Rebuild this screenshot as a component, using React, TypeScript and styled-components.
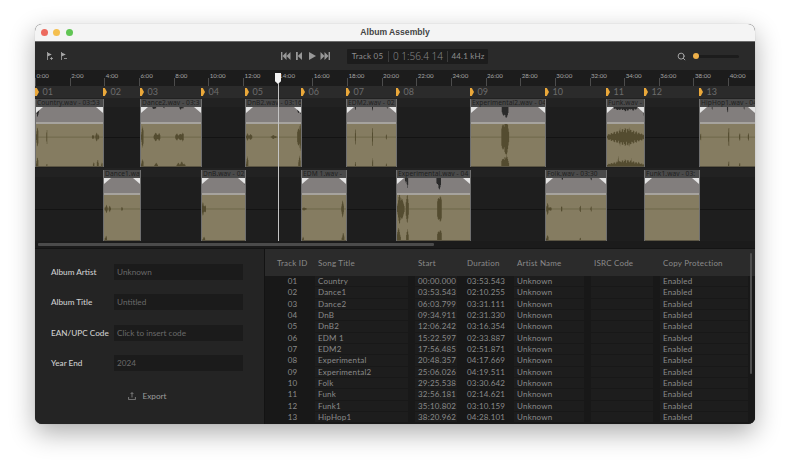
import React from "react";
import styled, { createGlobalStyle } from "styled-components";
import { Search } from "lucide-react";

const UI_FONT = `Lato, "Noto Sans", "Liberation Sans", sans-serif`;

type Spike = [number, number, number]; // x %, height %, half width %

interface ClipData {
    name: string;
    left: number;
    width: number;
    top?: Spike[];
    mid?: Spike[];
    base?: Spike[];
}

const TOP_LANE: ClipData[] = [
    {
        name: "Country.wav - 03:53", left: 0, width: 68,
        top: [[2, 70, 2.5]],
        mid: [[1.5, 28, 1.5], [16, 18, 0.6], [85, 8, 1.5], [90, 12, 1.5], [93, 9, 0.8]],
        base: [[1.5, 25, 1.5], [16, 10, 0.5], [86, 10, 1], [92, 18, 1.2], [98, 10, 0.8]],
    },
    {
        name: "Dance2.wav - 03:3", left: 105, width: 61,
        top: [[22, 20, 3], [38, 12, 1], [66, 20, 2], [69, 15, 1.5]],
        mid: [[2, 28, 2], [25, 12, 4], [30, 10, 2], [60, 10, 3], [66, 12, 3], [69, 12, 2]],
        base: [[2, 18, 2], [25, 8, 3], [62, 8, 3], [68, 12, 3], [72, 8, 2]],
    },
    {
        name: "DnB2.wav - 03:16", left: 210, width: 56,
        top: [[96, 60, 3], [99, 80, 1.5]],
        mid: [[2, 10, 2], [7, 8, 4], [50, 5, 5], [96, 30, 3], [98, 35, 2]],
        base: [[2, 25, 2], [97, 25, 2]],
    },
    {
        name: "EDM2.wav - 02", left: 311, width: 50,
        top: [[17, 30, 0.8], [52, 30, 1], [82, 12, 0.6]],
        mid: [[17, 28, 0.8], [52, 28, 1], [80, 8, 0.7]],
        base: [[17, 15, 0.8], [52, 20, 0.8], [80, 8, 0.7]],
    },
    {
        name: "Experimental2.wav - 04", left: 435, width: 75,
        top: [[46, 100, 4.5]],
        mid: [[46, 60, 5]],
        base: [[46, 35, 5]],
    },
    {
        name: "Funk.wav - 02", left: 571, width: 38,
        top: [[30, 25, 15], [50, 30, 20], [70, 25, 15], [99, 70, 2]],
        mid: [[50, 22, 50], [35, 25, 1.5], [60, 25, 1.5], [20, 15, 1.5], [80, 15, 1.5]],
        base: [[50, 16, 50], [30, 25, 1.5], [65, 20, 1.5], [85, 18, 1.5]],
    },
    {
        name: "HipHop1.wav - 04", left: 664, width: 56,
        top: [[50, 40, 1], [22, 20, 0.6], [80, 20, 0.5]],
        mid: [[1, 12, 1], [52, 28, 1], [72, 10, 1], [88, 10, 1]],
        base: [[52, 14, 1], [72, 8, 1]],
    },
];

const BOTTOM_LANE: ClipData[] = [
    {
        name: "Dance1.wav", left: 68, width: 37,
        mid: [[6, 10, 4], [16, 8, 3], [50, 6, 2]],
        base: [[5, 12, 3]],
    },
    {
        name: "DnB.wav - 02", left: 166, width: 44,
        top: [[99, 80, 1]],
        mid: [[2, 16, 3], [6, 12, 3]],
        base: [[4, 8, 3]],
    },
    {
        name: "EDM 1.wav -", left: 266, width: 45,
        mid: [[5, 4, 5], [92, 20, 3]],
        base: [[2, 8, 2], [93, 18, 3]],
    },
    {
        name: "Experimental.wav - 04", left: 361, width: 74,
        top: [[12, 35, 1], [14, 70, 0.8], [57, 100, 3]],
        mid: [[3, 35, 3], [6, 25, 4], [14, 35, 2], [58, 45, 3]],
        base: [[2, 28, 3], [14, 25, 1.5], [58, 35, 3]],
    },
    {
        name: "Folk.wav - 03:30", left: 510, width: 61,
        top: [[27, 18, 0.8], [75, 18, 0.8], [99, 50, 1]],
        mid: [[2, 18, 1.5], [6, 6, 3], [26, 8, 1], [57, 8, 1], [75, 8, 1]],
        base: [[2, 12, 2], [57, 6, 1]],
    },
    { name: "Funk1.wav - 03:", left: 609, width: 55 },
];

const MARKERS = [0, 68, 105, 166, 210, 266, 311, 361, 435, 510, 571, 609, 664];

const RULER = Array.from({ length: 21 }, (_, i) => `${i * 2}:00`);

const TRACKS = [
    ["01", "Country", "00:00.000", "03:53.543"],
    ["02", "Dance1", "03:53.543", "02:10.255"],
    ["03", "Dance2", "06:03.799", "03:31.111"],
    ["04", "DnB", "09:34.911", "02:31.330"],
    ["05", "DnB2", "12:06.242", "03:16.354"],
    ["06", "EDM 1", "15:22.597", "02:33.887"],
    ["07", "EDM2", "17:56.485", "02:51.871"],
    ["08", "Experimental", "20:48.357", "04:17.669"],
    ["09", "Experimental2", "25:06.026", "04:19.511"],
    ["10", "Folk", "29:25.538", "03:30.642"],
    ["11", "Funk", "32:56.181", "02:14.621"],
    ["12", "Funk1", "35:10.802", "03:10.159"],
    ["13", "HipHop1", "38:20.962", "04:28.101"],
];

const FIELDS = [
    ["Album Artist", "Unknown"],
    ["Album Title", "Untitled"],
    ["EAN/UPC Code", "Click to insert code"],
    ["Year End", "2024"],
];

// jagged columns for one spike, so the wave does not look like a solid blob
const columns = ([x, h, w]: Spike) => {
    const out: [number, number, number][] = [];
    const step = Math.max(0.7, Math.min(w / 8, 2));
    for (let dx = -w; dx <= w; dx += step) {
        const shape = 1 - Math.abs(dx) / (w + step);
        const noise = 0.5 + 0.5 * Math.abs(Math.sin((x + dx) * 12.9898));
        out.push([x + dx, h * (0.25 + 0.75 * shape) * noise, step]);
    }
    return out;
};

// spikes around a centre line
const midPath = (list: Spike[] = [], y: number) =>
    list.flatMap(columns).map(([x, h, w]) => `M${x} ${y - h}h${w}V${y + h}h${-w}Z`).join("");

// spikes that grow out of one edge
const edgePath = (list: Spike[] = [], y: number, dir: number) =>
    list.flatMap(columns).map(([x, h, w]) => `M${x} ${y}h${w}V${y + dir * h}h${-w}Z`).join("");

const GlobalStyle = createGlobalStyle`
    html, body {
        margin: 0;
        background: #ffffff;
        font-family: ${UI_FONT};
    }
    * {
        box-sizing: border-box;
    }
`;

const Page = styled.div`
    width: 790px;
    height: 471px;
    padding: 24px 35px;
    overflow: hidden;
`;

const Window = styled.div`
    width: 720px;
    height: 400px;
    border-radius: 7px;
    overflow: hidden;
    display: flex;
    flex-direction: column;
    background: #242424;
    box-shadow: 0 9px 26px rgba(0, 0, 0, 0.32), 0 0 1px rgba(0, 0, 0, 0.3);
`;

const TitleBar = styled.div`
    height: 18px;
    flex: none;
    display: flex;
    align-items: center;
    position: relative;
    padding-left: 5.5px;
    gap: 5.5px;
    background: #f4f4f4;
    border-bottom: 1px solid #6b6b6b;
`;

const Light = styled.span<{ $color: string }>`
    width: 7px;
    height: 7px;
    border-radius: 50%;
    background: ${(p) => p.$color};
`;

const Title = styled.div`
    position: absolute;
    inset: 0;
    text-align: center;
    font: 700 8.6px/17px "Liberation Sans", sans-serif;
    color: #444444;
`;

const Toolbar = styled.div`
    height: 28px;
    flex: none;
    display: grid;
    grid-template-columns: 234px auto 1fr;
    align-items: center;
    background: #2a2a2a;
    padding: 0 16px 0 12px;
`;

const FlagGroup = styled.div`
    display: flex;
    gap: 8px;
`;

const Center = styled.div`
    display: flex;
    align-items: center;
    gap: 17px;
`;

const Transport = styled.div`
    display: flex;
    align-items: center;
    gap: 3px;
`;

const Display = styled.div`
    height: 15px;
    display: flex;
    align-items: center;
    background: #1c1c1c;
    border-radius: 1px;
    color: #8e8e8e;
`;

const DisplayCell = styled.div<{ $w: number; $line?: boolean }>`
    width: ${(p) => p.$w}px;
    height: 11px;
    font-size: 8px;
    line-height: 11px;
    text-align: center;
    letter-spacing: 0.2px;
    white-space: nowrap;
    border-right: ${(p) => (p.$line ? "1px solid #3c3c3c" : "none")};
`;

const Timer = styled(DisplayCell)`
    font-family: "Noto Sans", sans-serif;
    font-weight: 300;
    font-size: 10px;
    letter-spacing: 0;
    color: #858585;
`;

const Zoom = styled.div`
    display: flex;
    justify-content: flex-end;
    align-items: center;
    gap: 7px;
    color: #a8a8a8;
`;

const Slider = styled.div`
    width: 46px;
    height: 3px;
    border-radius: 2px;
    background: #1c1c1c;
    position: relative;
    &::before {
        content: "";
        position: absolute;
        left: 0;
        top: -1.5px;
        width: 6px;
        height: 6px;
        border-radius: 50%;
        background: #eeb04a;
    }
`;

const Timeline = styled.div`
    height: 178px;
    flex: none;
    position: relative;
    overflow: hidden;
    background: #1e1e1e;
`;

const Ruler = styled.div`
    height: 16px;
    display: flex;
    overflow: hidden;
    background: #1c1c1c;
`;

const RulerCell = styled.div`
    flex: 0 0 34.67px;
    position: relative;
    padding: 1px 0 0 1.5px;
    font-size: 6.2px;
    line-height: 9px;
    color: #a4a4a4;
    &::before {
        content: "";
        position: absolute;
        left: 0;
        bottom: 0;
        width: 1px;
        height: 8px;
        background: #4c4c4c;
    }
`;

const MarkerRow = styled.div`
    height: 12px;
    position: relative;
    background: #2b2b2b;
`;

const Marker = styled.div`
    position: absolute;
    top: 2px;
    display: flex;
    align-items: center;
    gap: 3.5px;
    font-size: 9px;
    line-height: 8px;
    color: #6c6c6c;
`;

const Flag = styled.span`
    width: 4px;
    height: 8px;
    background: #eaa83a;
    clip-path: polygon(0 0, 45% 0, 100% 50%, 45% 100%, 0 100%);
`;

const Lane = styled.div<{ $h: number; $pt: number; $pb: number; $line: number }>`
    height: ${(p) => p.$h}px;
    padding: ${(p) => p.$pt}px 0 ${(p) => p.$pb}px;
    position: relative;
    background: linear-gradient(#222222 0 9px, #1e1e1e 9px);
    &::before {
        content: "";
        position: absolute;
        left: 0;
        right: 0;
        top: ${(p) => p.$line}px;
        height: 1px;
        background: #131313;
    }
`;

const ClipTrack = styled.div`
    height: 100%;
    position: relative;
`;

const Clip = styled.div`
    position: absolute;
    top: 0;
    bottom: 0;
    display: flex;
    flex-direction: column;
    border-left: 1px solid #6f6f6f;
    border-right: 1px solid #6f6f6f;
`;

const ClipLabel = styled.div`
    height: 8px;
    flex: none;
    padding-left: 1px;
    overflow: hidden;
    white-space: nowrap;
    background: #4a4a4a;
    color: #202020;
    font-family: "Noto Sans", sans-serif;
    font-size: 6.6px;
    line-height: 8px;
    letter-spacing: 0.1px;
`;

const Overview = styled.div`
    height: 15px;
    flex: none;
    position: relative;
    background: #827e7d;
    &::before,
    &::after {
        content: "";
        position: absolute;
        top: 0;
        width: 7px;
        height: 6px;
        background: #e4e4e4;
    }
    &::before {
        left: 0;
        clip-path: polygon(0 0, 100% 0, 0 100%);
    }
    &::after {
        right: 0;
        clip-path: polygon(0 0, 100% 0, 100% 100%);
    }
`;

const Strip = styled.div`
    height: 2px;
    flex: none;
    background: #a6a39e;
`;

const WaveBox = styled.div`
    flex: 1;
    min-height: 0;
    background: #857c61;
    border-bottom: 1px solid #5b5543;
`;

const WaveSvg = styled.svg`
    display: block;
    width: 100%;
    height: 100%;
`;

const ScrollTrack = styled.div`
    height: 7px;
    padding: 2px 0 0 3px;
    background: #1b1b1b;
`;

const ScrollThumb = styled.div`
    width: 396px;
    height: 3px;
    border-radius: 1px;
    background: #4b4b4b;
`;

const Playhead = styled.div`
    position: absolute;
    left: 240px;
    top: 3px;
    width: 6px;
    height: 168px;
    &::before {
        content: "";
        position: absolute;
        left: 0;
        top: 0;
        width: 6px;
        height: 11px;
        background: #f2f2f2;
        clip-path: polygon(0 0, 100% 0, 100% 75%, 50% 100%, 0 75%);
    }
    &::after {
        content: "";
        position: absolute;
        left: 2.5px;
        top: 10px;
        bottom: 0;
        width: 1px;
        background: #c4c4c4;
    }
`;

const Bottom = styled.div`
    flex: 1;
    min-height: 0;
    display: flex;
    border-top: 1px solid #141414;
`;

const FormPanel = styled.div`
    width: 230px;
    flex: none;
    padding: 15px 21px 0 16px;
    background: #242424;
    border-right: 1px solid #131313;
    display: flex;
    flex-direction: column;
    gap: 14.3px;
`;

const FieldRow = styled.div`
    display: flex;
    align-items: center;
    height: 16px;
`;

const FieldLabel = styled.div`
    width: 63px;
    font-size: 8.2px;
    font-weight: 500;
    color: #cfcfcf;
    white-space: nowrap;
`;

const FieldValue = styled.div`
    width: 129px;
    height: 16px;
    padding-left: 3px;
    background: #1b1b1b;
    color: #6a6a6a;
    font-size: 8.2px;
    line-height: 16px;
`;

const ExportButton = styled.div`
    display: flex;
    align-items: center;
    justify-content: center;
    gap: 7px;
    margin-top: 6px;
    font-size: 8.2px;
    color: #9c9c9c;
`;

const TablePanel = styled.div`
    flex: 1;
    position: relative;
    overflow: hidden;
    background: #181818;
`;

const Columns = styled.div`
    display: grid;
    grid-template-columns: 43px 93px 42px 43px 70px 62px 88px;
    column-gap: 7px;
`;

const HeaderRow = styled(Columns)`
    height: 27px;
    align-items: center;
    background: #2b2b2b;
    color: #8a8a8a;
    font-size: 8px;
    letter-spacing: 0.2px;
`;

const TrackRow = styled(Columns)`
    height: 11.33px;
    background: #181818;
    border-bottom: 1px solid #181818;
    color: #8a8a8a;
    font-size: 8px;
    line-height: 10.33px;
    letter-spacing: 0.2px;
`;

const Cell = styled.div<{ $plain?: boolean }>`
    padding-left: 3px;
    white-space: nowrap;
    background: ${(p) => (p.$plain ? "transparent" : "#1d1d1d")};
`;

const IdCell = styled(Cell)`
    padding: 0 0 0 12px;
    text-align: center;
`;

const IdHead = styled.div`
    padding-left: 12px;
    white-space: nowrap;
`;

const TableScroll = styled.div`
    position: absolute;
    right: 3px;
    top: 4px;
    width: 2px;
    height: 121px;
    border-radius: 1px;
    background: #4e4e4e;
`;

const Waveform = ({ clip }: { clip: ClipData }) => (
    <WaveSvg viewBox="0 0 100 100" preserveAspectRatio="none">
        <rect x="0" y="30.5" width="100" height="1.2" fill="#5a5335" />
        <path d={midPath(clip.mid, 31) + edgePath(clip.base, 100, -1)} fill="#544c30" />
    </WaveSvg>
);

const TrackClip = ({ clip }: { clip: ClipData }) => (
    <Clip style={{ left: clip.left, width: clip.width + 1 }}>
        <ClipLabel>{clip.name}</ClipLabel>
        <Overview>
            <WaveSvg viewBox="0 0 100 100" preserveAspectRatio="none">
                <path d={edgePath(clip.top, 0, 1)} fill="#2a2a2a" />
            </WaveSvg>
        </Overview>
        <Strip />
        <WaveBox>
            <Waveform clip={clip} />
        </WaveBox>
    </Clip>
);

const FlagIcon = ({ minus }: { minus?: boolean }) => (
    <svg width="6" height="8" viewBox="0 0 6 8">
        <path d="M0.5 0V8" stroke="#a8a8a8" strokeWidth="0.8" />
        <path d="M0.5 0.5L4.8 2.4L0.5 4.6Z" fill="#a8a8a8" />
        <path d={minus ? "M3 6.5H6" : "M3 6.5H6M4.5 5V8"} stroke="#a8a8a8" strokeWidth="0.8" />
    </svg>
);

const TransportIcon = ({ d }: { d: string }) => (
    <svg width="10" height="8" viewBox="0 0 10 8">
        <path d={d} fill="#989898" />
    </svg>
);

const App = () => {
    return (
        <Page>
            <GlobalStyle />
            <Window>
                <TitleBar>
                    <Light $color="#ec6a5e" />
                    <Light $color="#f4bf4f" />
                    <Light $color="#61c554" />
                    <Title>Album Assembly</Title>
                </TitleBar>
                <Toolbar>
                    <FlagGroup>
                        <FlagIcon />
                        <FlagIcon minus />
                    </FlagGroup>
                    <Center>
                        <Transport>
                            <TransportIcon d="M0 0H1.4V8H0ZM1.5 4L5.5 0V8ZM5.5 4L9.5 0V8Z" />
                            <TransportIcon d="M2 0H3.8V8H2ZM3.8 4L8 0V8Z" />
                            <TransportIcon d="M2 0L9 4L2 8Z" />
                            <TransportIcon d="M0.5 0L4.5 4L0.5 8ZM4.5 0L8.5 4L4.5 8ZM8.6 0H10V8H8.6Z" />
                        </Transport>
                        <Display>
                            <DisplayCell $w={42} $line>Track 05</DisplayCell>
                            <Timer $w={59} $line>0 1:56.4 14</Timer>
                            <DisplayCell $w={40}>44.1 kHz</DisplayCell>
                        </Display>
                    </Center>
                    <Zoom>
                        <Search size={9} strokeWidth={2.6} />
                        <Slider />
                    </Zoom>
                </Toolbar>
                <Timeline>
                    <Ruler>
                        {RULER.map((label) => (
                            <RulerCell key={label}>{label}</RulerCell>
                        ))}
                    </Ruler>
                    <MarkerRow>
                        {MARKERS.map((left, i) => (
                            <Marker key={left} style={{ left }}>
                                <Flag />
                                {String(i + 1).padStart(2, "0")}
                            </Marker>
                        ))}
                    </MarkerRow>
                    <Lane $h={70} $pt={1} $pb={1} $line={39}>
                        <ClipTrack>
                            {TOP_LANE.map((clip) => (
                                <TrackClip key={clip.name} clip={clip} />
                            ))}
                        </ClipTrack>
                    </Lane>
                    <Lane $h={73} $pt={2} $pb={0} $line={41}>
                        <ClipTrack>
                            {BOTTOM_LANE.map((clip) => (
                                <TrackClip key={clip.name} clip={clip} />
                            ))}
                        </ClipTrack>
                    </Lane>
                    <ScrollTrack>
                        <ScrollThumb />
                    </ScrollTrack>
                    <Playhead />
                </Timeline>
                <Bottom>
                    <FormPanel>
                        {FIELDS.map(([label, value]) => (
                            <FieldRow key={label}>
                                <FieldLabel>{label}</FieldLabel>
                                <FieldValue>{value}</FieldValue>
                            </FieldRow>
                        ))}
                        <ExportButton>
                            <svg width="8" height="8" viewBox="0 0 8 8" fill="none" stroke="#9c9c9c" strokeWidth="0.7">
                                <path d="M4 5.5V0.6M2.6 2L4 0.6L5.4 2M0.6 5V7.6H7.4V5" />
                            </svg>
                            Export
                        </ExportButton>
                    </FormPanel>
                    <TablePanel>
                        <HeaderRow>
                            <IdHead>Track ID</IdHead>
                            <Cell $plain>Song Title</Cell>
                            <Cell $plain>Start</Cell>
                            <Cell $plain>Duration</Cell>
                            <Cell $plain>Artist Name</Cell>
                            <Cell $plain>ISRC Code</Cell>
                            <Cell $plain>Copy Protection</Cell>
                        </HeaderRow>
                        {TRACKS.map(([id, title, start, duration]) => (
                            <TrackRow key={id}>
                                <IdCell $plain>{id}</IdCell>
                                <Cell>{title}</Cell>
                                <Cell>{start}</Cell>
                                <Cell $plain>{duration}</Cell>
                                <Cell>Unknown</Cell>
                                <Cell />
                                <Cell>Enabled</Cell>
                            </TrackRow>
                        ))}
                        <TableScroll />
                    </TablePanel>
                </Bottom>
            </Window>
        </Page>
    );
};

export default App;
